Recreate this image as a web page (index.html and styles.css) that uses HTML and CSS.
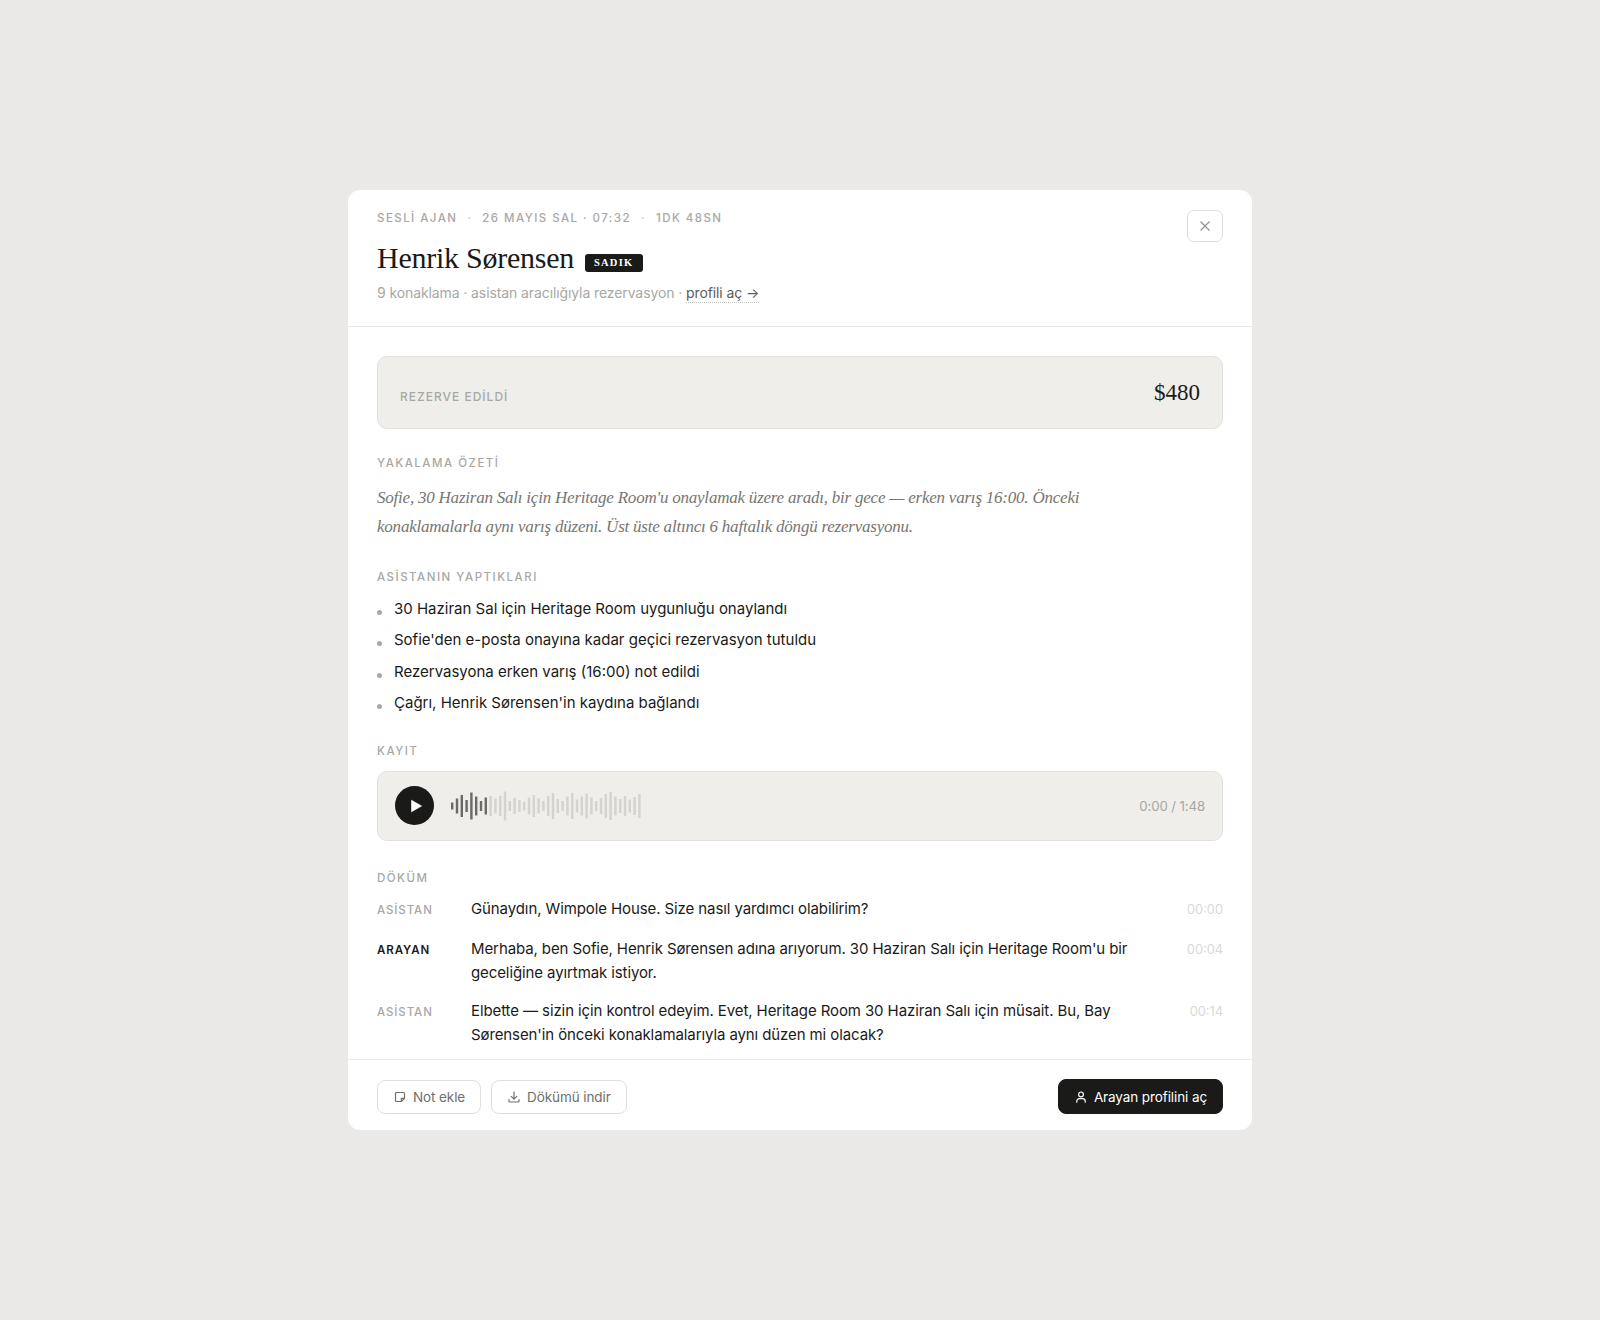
FILE: index.html
```html
<!DOCTYPE html>
<html lang="tr">
<head>
<meta charset="utf-8">
<title>Henrik Sørensen</title>
<link rel="stylesheet" href="styles.css">
</head>
<body>
<main class="card">
  <header class="head">
    <div class="head-main">
      <div class="meta"><span>SESLİ AJAN</span><i>·</i><span>26 MAYIS SAL · 07:32</span><i>·</i><span>1DK 48SN</span></div>
      <div class="title-row"><h1>Henrik Sørensen</h1><span class="badge">SADIK</span></div>
      <p class="sub">9 konaklama · asistan aracılığıyla rezervasyon · <a class="link">profili aç →</a></p>
    </div>
    <button class="close"><svg width="12" height="12" viewBox="0 0 12 12"><path d="M1.5 1.5l9 9M10.5 1.5l-9 9" stroke="#8f8f8b" stroke-width="1.1" fill="none"/></svg></button>
  </header>
  <div class="body">
    <section class="outcome"><span class="outcome-label">REZERVE EDİLDİ</span><span class="price">$480</span></section>
    <h2 class="label l-summary">YAKALAMA ÖZETİ</h2>
    <p class="summary">Sofie, 30 Haziran Salı için Heritage Room'u onaylamak üzere aradı, bir gece — erken varış 16:00. Önceki konaklamalarla aynı varış düzeni. Üst üste altıncı 6 haftalık döngü rezervasyonu.</p>
    <h2 class="label l-actions">ASİSTANIN YAPTIKLARI</h2>
    <ul class="actions">
      <li>30 Haziran Sal için Heritage Room uygunluğu onaylandı</li>
      <li>Sofie'den e-posta onayına kadar geçici rezervasyon tutuldu</li>
      <li>Rezervasyona erken varış (16:00) not edildi</li>
      <li>Çağrı, Henrik Sørensen'in kaydına bağlandı</li>
    </ul>
    <h2 class="label l-rec">KAYIT</h2>
    <section class="player">
      <button class="play"><svg width="14" height="14" viewBox="0 0 14 14"><path d="M2.5 1.2L12.6 7 2.5 12.8z" fill="#fff" stroke="#fff" stroke-width=".6" stroke-linejoin="round"/></svg></button>
      <svg class="wave" id="wave" width="192" height="30" viewBox="0 0 192 30"></svg>
      <span class="time">0:00 / 1:48</span>
    </section>
    <h2 class="label l-trans">DÖKÜM</h2>
    <div class="turn"><span class="who">ASİSTAN</span><p>Günaydın, Wimpole House. Size nasıl yardımcı olabilirim?</p><span class="ts">00:00</span></div>
    <div class="turn"><span class="who caller">ARAYAN</span><p>Merhaba, ben Sofie, Henrik Sørensen adına arıyorum. 30 Haziran Salı için Heritage Room'u bir geceliğine ayırtmak istiyor.</p><span class="ts">00:04</span></div>
    <div class="turn"><span class="who">ASİSTAN</span><p>Elbette — sizin için kontrol edeyim. Evet, Heritage Room 30 Haziran Salı için müsait. Bu, Bay Sørensen'in önceki konaklamalarıyla aynı düzen mi olacak?</p><span class="ts">00:14</span></div>
  </div>
  <footer class="foot">
    <button class="btn"><svg width="14" height="14" viewBox="0 0 14 14" fill="none" stroke="#6f6f6b" stroke-width="1.2" stroke-linejoin="round"><path d="M2.5 3.5a1 1 0 0 1 1-1h7a1 1 0 0 1 1 1v4.8L8.3 11.5H3.5a1 1 0 0 1-1-1z"/><path d="M8.3 11.5V8.3h3.2"/></svg>Not ekle</button>
    <button class="btn"><svg width="14" height="14" viewBox="0 0 14 14" fill="none" stroke="#6f6f6b" stroke-width="1.2" stroke-linecap="round" stroke-linejoin="round"><path d="M7 2v7M4.2 6.4L7 9.2l2.8-2.8M2 9.5v1.7a.8.8 0 0 0 .8.8h8.4a.8.8 0 0 0 .8-.8V9.5"/></svg>Dökümü indir</button>
    <button class="btn primary"><svg width="14" height="14" viewBox="0 0 14 14" fill="none" stroke="#fff" stroke-width="1.2" stroke-linecap="round"><circle cx="7" cy="4.4" r="2.4"/><path d="M2.8 12.2v-1a2.6 2.6 0 0 1 2.6-2.6h3.2a2.6 2.6 0 0 1 2.6 2.6v1"/></svg>Arayan profilini aç</button>
  </footer>
</main>
<script src="wave.js"></script>
</body>
</html>
```
FILE: wave.js
```js
var heights = [7,15,22,12,27,19,10,17,20,15,20,29,10,16,12,9,17,22,15,10,20,26,14,10,19,26,13,19,25,17,10,16,24,28,19,14,20,13,18,24];
var wave = document.getElementById('wave');
heights.forEach(function (h, i) {
  var r = document.createElementNS('http://www.w3.org/2000/svg', 'rect');
  r.setAttribute('class', i < 8 ? 'bar on' : 'bar');
  r.setAttribute('x', (i * 4.8).toFixed(2));
  r.setAttribute('y', (15 - h / 2).toFixed(1));
  r.setAttribute('width', '2.4');
  r.setAttribute('height', h);
  wave.appendChild(r);
});
```
FILE: styles.css
```css
* { box-sizing: border-box; }
html, body { margin: 0; height: 100%; }
body {
  background: #eae9e7;
  display: flex;
  align-items: center;
  justify-content: center;
  font-family: "Inter", "Open Sans", sans-serif;
  color: #1a1a18;
}
.card {
  width: 904px;
  height: 940px;
  background: #fff;
  border-radius: 12px;
  display: flex;
  flex-direction: column;
  overflow: hidden;
}
.head {
  height: 137px;
  flex: none;
  padding: 20px 29px 0 29px;
  border-bottom: 1px solid #e8e7e4;
  display: flex;
  justify-content: space-between;
  align-items: flex-start;
}
.meta {
  display: flex;
  gap: 10px;
  font-size: 11.5px;
  line-height: 16px;
  font-weight: 500;
  letter-spacing: 1.45px;
  color: #a8a8a4;
}
.meta i { font-style: normal; color: #cfcfcb; }
.title-row { display: flex; align-items: center; gap: 11px; margin-top: 12px; }
h1 {
  margin: 0;
  font-family: "Liberation Serif", serif;
  font-weight: 400;
  font-size: 30px;
  line-height: 40px;
  letter-spacing: -0.25px;
}
.badge {
  background: #1a1a18;
  color: #fff;
  font-family: "Liberation Serif", serif;
  font-weight: 700;
  font-size: 10.5px;
  letter-spacing: 1.2px;
  border-radius: 3px;
  padding: 2px 10px 2px 9px;
  height: 18px;
  line-height: 14px;
  margin-top: 9px;
}
.sub { margin: 4px 0 0; font-size: 14px; line-height: 22px; color: #a8a8a4; letter-spacing: -0.1px; }
.link { color: #5c5c58; border-bottom: 1px dotted #c4c4c0; padding-bottom: 1px; }
.close {
  width: 36px;
  height: 32px;
  border: 1px solid #e0dfdb;
  border-radius: 7px;
  background: #fff;
  padding: 0;
  display: flex;
  align-items: center;
  justify-content: center;
}
.body {
  flex: 1;
  min-height: 0;
  overflow: hidden;
  padding: 29px 29px 0 29px;
}
.outcome {
  height: 73px;
  background: #efeeeb;
  border: 1px solid #e2e1dd;
  border-radius: 10px;
  padding: 0 22px;
  display: flex;
  align-items: center;
  justify-content: space-between;
}
.outcome-label { font-size: 12px; font-weight: 500; letter-spacing: 1px; color: #a8a8a4; margin-top: 8px; }
.price { font-family: "Liberation Serif", serif; font-size: 23px; color: #1a1a18; margin-top: 1px; }
.label {
  margin: 0;
  font-size: 11.5px;
  line-height: 16px;
  font-weight: 500;
  letter-spacing: 1.5px;
  color: #a8a8a4;
}
.l-summary { margin-top: 26px; }
.summary {
  margin: 12px 0 0;
  max-width: 720px;
  font-family: "Liberation Serif", serif;
  font-style: italic;
  font-size: 17px;
  line-height: 29px;
  letter-spacing: -0.22px;
  color: #767672;
}
.l-actions { margin-top: 28px; }
.actions { list-style: none; margin: 12px 0 0; padding: 0; }
.actions li {
  position: relative;
  padding-left: 17px;
  font-size: 15px;
  line-height: 23px;
  margin-bottom: 8.3px;
}
.actions li::before {
  content: "";
  position: absolute;
  left: 0;
  top: 13px;
  width: 5px;
  height: 5px;
  border-radius: 50%;
  background: #a8a8a4;
}
.l-rec { margin-top: 29px; }
.player {
  margin-top: 12px;
  height: 70px;
  background: #efeeeb;
  border: 1px solid #e2e1dd;
  border-radius: 10px;
  padding: 0 17px;
  display: flex;
  align-items: center;
}
.play {
  width: 39px;
  height: 39px;
  border-radius: 50%;
  border: 0;
  background: #1a1a18;
  padding: 0 0 0 2px;
  display: flex;
  align-items: center;
  justify-content: center;
  flex: none;
}
.wave { margin-left: 17px; flex: none; }
.bar { fill: #d4d3cf; }
.bar.on { fill: #6a6a66; }
.time { margin-left: auto; font-size: 13.2px; color: #a8a8a4; letter-spacing: -0.1px; }
.l-trans { margin-top: 29px; }
.turn { display: flex; margin-top: 0; margin-bottom: 14.5px; }
.l-trans + .turn { margin-top: 11.5px; }
.who {
  width: 94px;
  flex: none;
  font-size: 11.5px;
  font-weight: 500;
  letter-spacing: 0.9px;
  line-height: 24px;
  padding-top: 1px;
  color: #a8a8a4;
}
.who.caller { color: #1a1a18; font-weight: 600; }
.turn p { margin: 0; flex: 1; font-size: 15px; line-height: 24px; padding-right: 50px; letter-spacing: -0.1px; }
.ts { font-size: 12.8px; line-height: 24px; padding-top: 1px; color: #d9d9d5; }
.foot {
  height: 71px;
  flex: none;
  border-top: 1px solid #e8e7e4;
  padding: 3px 29px 0;
  display: flex;
  align-items: center;
  gap: 10px;
}
.btn {
  height: 34px;
  border: 1px solid #e0dfdb;
  border-radius: 8px;
  background: #fff;
  padding: 0 15px;
  display: flex;
  align-items: center;
  gap: 6px;
  font-family: inherit;
  font-size: 13.5px;
  letter-spacing: -0.1px;
  color: #6f6f6b;
}
.btn.primary {
  margin-left: auto;
  height: 35px;
  background: #1a1a18;
  border-color: #1a1a18;
  color: #fff;
}
```
